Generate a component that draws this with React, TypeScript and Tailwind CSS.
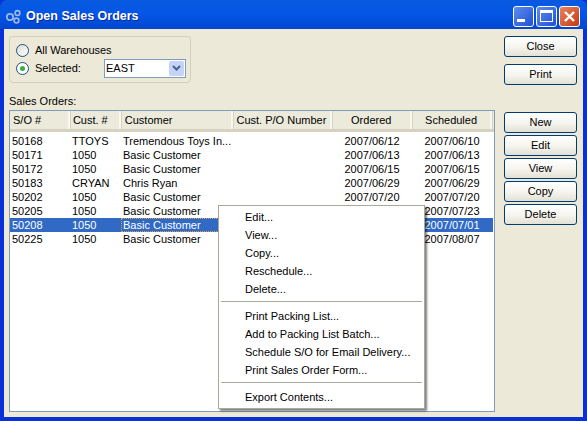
import React from "react";

const rows = [
  ["50168", "TTOYS", "Tremendous Toys In...", "2007/06/12", "2007/06/10"],
  ["50171", "1050", "Basic Customer", "2007/06/13", "2007/06/13"],
  ["50172", "1050", "Basic Customer", "2007/06/15", "2007/06/15"],
  ["50183", "CRYAN", "Chris Ryan", "2007/06/29", "2007/06/29"],
  ["50202", "1050", "Basic Customer", "2007/07/20", "2007/07/20"],
  ["50205", "1050", "Basic Customer", "2007/07/23", "2007/07/23"],
  ["50208", "1050", "Basic Customer", "2007/07/01", "2007/07/01"],
  ["50225", "1050", "Basic Customer", "2007/08/07", "2007/08/07"],
];

const XpButton: React.FC<{ label: string }> = ({ label }) => (
  <button className="w-[73px] h-[21px] rounded-[3px] border border-[#003c74] bg-gradient-to-b from-white via-[#f6f5ef] to-[#e3e1d6] text-black text-[11px] leading-none">
    {label}
  </button>
);

const Caption: React.FC<{ children: React.ReactNode; close?: boolean }> = ({ children, close }) => (
  <div
    className={`w-[21px] h-[21px] rounded-[3px] border border-white flex items-center justify-center ${
      close ? "bg-gradient-to-br from-[#e8825c] to-[#c4380f]" : "bg-gradient-to-br from-[#5f8cf0] to-[#1f4fd0]"
    }`}
  >
    {children}
  </div>
);

const HeaderCell: React.FC<{ label: string; className: string }> = ({ label, className }) => (
  <div className={`h-full flex items-center border-r-2 border-[#f8f7f0] shadow-[1px_0_0_#d6d3c4] ${className}`}>{label}</div>
);

const MenuItem: React.FC<{ label: string }> = ({ label }) => (
  <div className="h-[18px] pl-[24px] flex items-center text-[11px] text-black whitespace-nowrap">{label}</div>
);

const App: React.FC = () => {
  return (
    <div className="w-[587px] h-[421px] overflow-hidden flex flex-col bg-[#0831d9] text-[11px] text-black font-['Liberation_Sans','Noto_Sans',sans-serif]">
      {/* Title bar */}
      <header className="h-[29px] shrink-0 flex items-center pl-[5px] pr-[7px] rounded-t-[7px] bg-gradient-to-b from-[#0a5ae0] via-[#0355e6] to-[#0246d0]">
        <svg width="17" height="17" viewBox="0 0 17 17" className="mr-[4px] mt-[3px]">
          <circle cx="5" cy="9" r="3.2" fill="none" stroke="#9db8e0" strokeWidth="1.8" />
          <circle cx="12.5" cy="5" r="2.4" fill="none" stroke="#9db8e0" strokeWidth="1.6" />
          <circle cx="11.5" cy="12.5" r="2.4" fill="none" stroke="#9db8e0" strokeWidth="1.6" />
        </svg>
        <span className="text-white font-bold text-[12.5px] mt-[3px] [text-shadow:1px_1px_0_#0a2a9a]">Open Sales Orders</span>
        <div className="ml-auto mt-[3px] flex gap-[2px]">
          <Caption>
            <div className="w-[8px] h-[3px] bg-white mt-[9px] mr-[5px]" />
          </Caption>
          <Caption>
            <div className="w-[13px] h-[12px] border border-white border-t-[3px]" />
          </Caption>
          <Caption close>
            <svg width="13" height="13" viewBox="0 0 13 13">
              <path d="M2 2 L11 11 M11 2 L2 11" stroke="white" strokeWidth="2.4" />
            </svg>
          </Caption>
        </div>
      </header>

      {/* Window body */}
      <div className="relative flex-1 mx-[4px] mb-[4px] bg-[#ece9d8] flex pl-[5px] pr-[9px] pt-[7px] pb-[5px] min-h-0">
        <main className="w-[486px] flex flex-col min-h-0">
          <fieldset className="w-[182px] h-[47px] rounded-[4px] border border-[#d0d0bf] pl-[6px] pt-[4px]">
            <label className="h-[18px] flex items-center gap-[6px]">
              <span className="w-[13px] h-[13px] rounded-full border border-[#1c5180] bg-gradient-to-br from-[#dcdcd5] to-white" />
              All Warehouses
            </label>
            <div className="h-[18px] flex items-center">
              <span className="w-[13px] h-[13px] rounded-full border border-[#1c5180] bg-white flex items-center justify-center mr-[6px]">
                <span className="w-[5px] h-[5px] rounded-full bg-[#3fae3f]" />
              </span>
              <span className="w-[69px]">Selected:</span>
              <div className="w-[82px] h-[19px] border border-[#7f9db9] bg-white flex items-center pl-[1px] pr-[1px]">
                <span className="flex-1">EAST</span>
                <div className="w-[15px] h-[15px] rounded-[2px] bg-[#c3d3fb] flex items-center justify-center">
                  <svg width="9" height="7" viewBox="0 0 9 7">
                    <path d="M1 1 L4.5 4.5 L8 1" fill="none" stroke="#4d6185" strokeWidth="2" />
                  </svg>
                </div>
              </div>
            </div>
          </fieldset>

          <div className="mt-[10px] h-[16px] flex items-center">Sales Orders:</div>

          {/* Order list */}
          <section className="mt-[1px] flex-1 min-h-0 border border-[#7f9db9] bg-white overflow-hidden">
            <div className="h-[21px] flex bg-[#ebeadb] border-b-[3px] border-[#d6d2c2] pr-[2px]">
              <HeaderCell label="S/O #" className="w-[60px] pl-[3px]" />
              <HeaderCell label="Cust. #" className="w-[51px] pl-[3px]" />
              <HeaderCell label="Customer" className="w-[112px] pl-[4px]" />
              <HeaderCell label="Cust. P/O Number" className="w-[100px] justify-center" />
              <HeaderCell label="Ordered" className="w-[80px] justify-center" />
              <HeaderCell label="Scheduled" className="w-[80px] justify-center" />
            </div>
            <div className="pt-[2px] w-[483px]">
              {rows.map((r, i) => {
                const sel = i === 6;
                return (
                  <div key={r[0]} className={`h-[14px] flex items-center leading-none ${sel ? "bg-[#316ac5] text-white" : ""}`}>
                    <div className="w-[60px] pl-[2px]">{r[0]}</div>
                    <div className="w-[51px] pl-[2px]">{r[1]}</div>
                    <div className={`w-[112px] h-full pl-[2px] flex items-center whitespace-nowrap ${sel ? "outline-1 -outline-offset-1 outline-dotted outline-[#e0a040]" : ""}`}>
                      {r[2]}
                    </div>
                    <div className="w-[99px]" />
                    <div className="w-[80px] text-center">{r[3]}</div>
                    <div className="w-[80px] text-center">{r[4]}</div>
                  </div>
                );
              })}
            </div>
          </section>
        </main>

        <aside className="ml-[9px] flex flex-col">
          <div className="flex flex-col gap-[7px]">
            <XpButton label="Close" />
            <XpButton label="Print" />
          </div>
          <div className="mt-[27px] flex flex-col gap-[2px]">
            <XpButton label="New" />
            <XpButton label="Edit" />
            <XpButton label="View" />
            <XpButton label="Copy" />
            <XpButton label="Delete" />
          </div>
        </aside>

        {/* Context menu */}
        <div className="absolute left-[214px] top-[176px] w-[207px] h-[204px] bg-white border border-[#aca899] shadow-[2px_2px_2px_rgba(0,0,0,0.5)] pt-[2px] px-[2px]">
          {["Edit...", "View...", "Copy...", "Reschedule...", "Delete..."].map((m) => (
            <MenuItem key={m} label={m} />
          ))}
          <div className="mt-[3px] mb-[3px] h-px bg-[#aca899]" />
          <div className="pt-[2px]">
            {["Print Packing List...", "Add to Packing List Batch...", "Schedule S/O for Email Delivery...", "Print Sales Order Form..."].map((m) => (
              <MenuItem key={m} label={m} />
            ))}
          </div>
          <div className="my-[3px] h-px bg-[#aca899]" />
          <div className="pt-[2px]">
            <MenuItem label="Export Contents..." />
          </div>
        </div>
      </div>
    </div>
  );
};

export default App;
